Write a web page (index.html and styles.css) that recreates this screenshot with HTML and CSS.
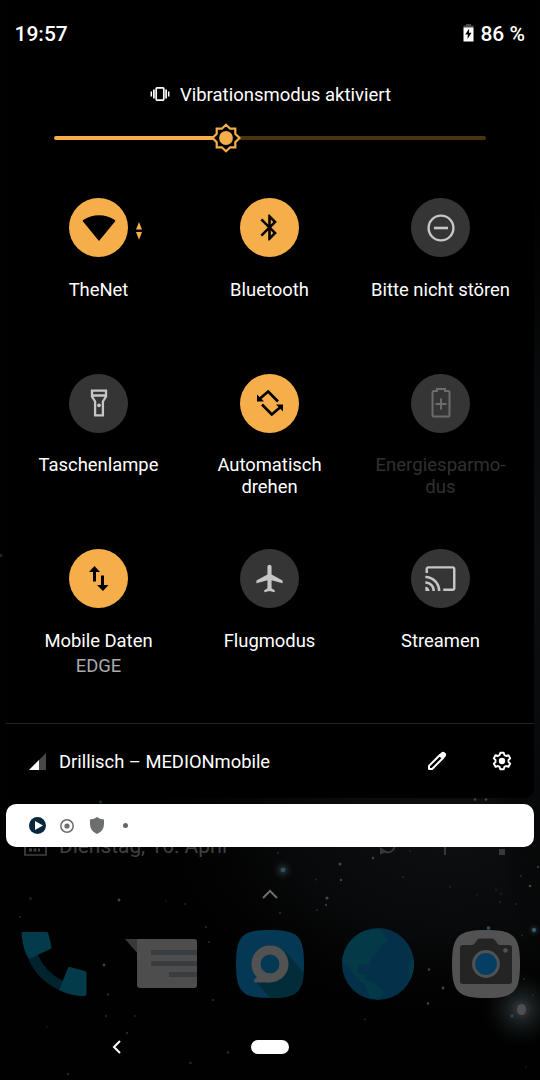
FILE: index.html
```html
<!DOCTYPE html>
<html lang="de">
<head>
<meta charset="utf-8">
<title>Schnelleinstellungen</title>
<link rel="stylesheet" href="styles.css">
</head>
<body>
<div class="screen">
  <svg class="wallpaper" viewBox="0 0 540 1080" aria-hidden="true">
    <defs>
      <radialGradient id="haze"><stop offset="0" stop-color="#0e0f11"/><stop offset=".5" stop-color="#08090a"/><stop offset="1" stop-color="#000" stop-opacity="0"/></radialGradient>
      <radialGradient id="glow"><stop offset="0" stop-color="#3c3c3c"/><stop offset=".28" stop-color="#1b2224"/><stop offset="1" stop-color="#0b0b0b" stop-opacity="0"/></radialGradient>
    </defs>
    <rect width="540" height="1080" fill="#010101"/>
    <ellipse cx="450" cy="830" rx="320" ry="210" fill="url(#haze)"/>
    <ellipse cx="540" cy="560" rx="60" ry="400" fill="url(#haze)"/>
    <circle cx="521" cy="1009" r="38" fill="url(#glow)"/>
    <ellipse cx="521.500" cy="1009.500" rx="4.500" ry="5.500" fill="#4d4f50"/>
    <circle cx="283" cy="870" r="11" fill="url(#glow)"/>
    <circle cx="283" cy="870" r="2.300" fill="#315065"/>
    <circle cx="534" cy="930" r="7" fill="url(#glow)"/>
    <circle cx="534" cy="930" r="2" fill="#336176"/>
    <circle cx="488.500" cy="928" r="1.800" fill="#265568"/>
    <circle cx="512" cy="1016" r="1.800" fill="#244654"/>
    <circle cx="100.500" cy="802" r="1.500" fill="#0b3341"/>
    <g fill="#434546">
      <circle cx="119" cy="900" r="1.500"/><circle cx="104" cy="965" r="1.500"/><circle cx="327" cy="898" r="1.600"/><circle cx="326" cy="905" r="1.100"/><circle cx="443" cy="988" r="1.400"/><circle cx="429" cy="969.500" r="1.200"/><circle cx="428" cy="1003.500" r="1.200"/><circle cx="341" cy="880" r="1.200"/><circle cx="340" cy="864" r="1.500"/><circle cx="373" cy="858" r="1.200"/><circle cx="530" cy="886" r="1.300"/><circle cx="475" cy="799.500" r="1.300"/><circle cx="486" cy="799.500" r="1.300"/><circle cx="538" cy="867" r="1"/>
    </g>
    <g fill="#262828">
      <circle cx="30.500" cy="898.500" r="1.300"/><circle cx="20" cy="917" r="1.100"/><circle cx="108" cy="994.500" r="1.200"/><circle cx="127" cy="1033" r="1.300"/><circle cx="106" cy="1016" r="1.100"/><circle cx="185" cy="904" r="1"/><circle cx="206" cy="927" r="1.100"/><circle cx="209" cy="942" r="1.100"/><circle cx="213" cy="1000" r="1.200"/><circle cx="228" cy="1052.500" r="1.300"/><circle cx="190.500" cy="1063" r="1.300"/><circle cx="68" cy="1074" r="1.200"/><circle cx="280" cy="913" r="1.200"/><circle cx="403" cy="877" r="1.100"/><circle cx="316" cy="879.500" r="1"/><circle cx="317" cy="910" r="1"/><circle cx="365" cy="1019.500" r="1"/><circle cx="521" cy="876" r="1.100"/><circle cx="500" cy="902" r="1.100"/><circle cx="516" cy="904" r="1"/><circle cx="501" cy="894" r=".9"/><circle cx="496" cy="889.500" r=".9"/><circle cx="450" cy="887" r=".9"/><circle cx="477" cy="895" r=".8"/><circle cx="522" cy="935.500" r="1"/><circle cx="524" cy="979" r="1"/><circle cx="533" cy="995" r="1"/><circle cx="278" cy="853" r="1"/><circle cx="410" cy="851" r=".9"/><circle cx="166" cy="901" r=".8"/><circle cx="135" cy="1016" r=".9"/><circle cx="47" cy="1027" r=".8"/><circle cx="1" cy="555.500" r="1.500"/><circle cx="526" cy="1067" r=".8"/>
    </g>
  </svg>

  <section class="panel">
    <header class="status">
      <span>19:57</span>
      <span class="battery">
        <svg width="11" height="18" viewBox="0 0 11 18"><path d="M3 0h5v1.500h2.500V4H.5V1.500H3z" fill="#4b4b4b"/><path d="M.5 3.500h10V17.500H.5z" fill="#fff"/><path d="M6.200 4.500 2.300 10.500h2.500L4.500 15 8.600 8.800H6z" fill="#000"/></svg>
        86 %
      </span>
    </header>

    <div class="ringer">
      <svg width="20" height="16" viewBox="0 0 20 16" fill="none" stroke="#fff"><rect x="6.200" y="1.900" width="7.600" height="12.200" rx=".8" stroke-width="1.700"/><path d="M3.900 3.500v9M16.100 3.500v9" stroke-width="1.700"/><path d="M1.300 5.500v5M18.700 5.500v5" stroke-width="1.500"/></svg>
      <span>Vibrationsmodus aktiviert</span>
    </div>

    <div class="brightness">
      <span class="level"></span>
      <svg class="thumb" width="30" height="30" viewBox="-15 -15 30 30"><path d="M0-13.200 4.200-9.300H9.300v5.100L13.500 0 9.300 4.200V9.300H4.200L0 13.200-4.200 9.300H-9.300V4.200L-13.500 0-9.300-4.200V-9.300h5.100z" fill="#000" stroke="#f5ae49" stroke-width="2.200"/><circle r="6.900" fill="#f5ae49"/></svg>
      <span class="rest"></span>
    </div>

    <div class="tiles">
      <div class="tile">
        <div class="disc on"><svg width="34" height="28" viewBox="0 0 34 28"><path d="M17 27 .8 7.300Q.5 6.600 1.200 6C10-.5 24-.5 32.800 6q.7.600.4 1.300z"/></svg>
          <svg class="activity" width="6" height="18" viewBox="0 0 6 18" fill="#f5ae49"><path d="M3 0 6 7.500H0zM0 10h6l-3 7.700z"/></svg></div>
        <span>TheNet</span>
      </div>
      <div class="tile">
        <div class="disc on"><svg width="31" height="31" viewBox="0 0 24 24"><path d="M17.710 7.710 12 2h-1v7.590L6.410 5 5 6.410 10.590 12 5 17.590 6.410 19 11 14.410V22h1l5.710-5.710L13.410 12zM13 5.830l1.880 1.880L13 9.590zm1.880 10.460L13 18.170v-3.760z"/></svg></div>
        <span>Bluetooth</span>
      </div>
      <div class="tile">
        <div class="disc"><svg width="28" height="28" viewBox="0 0 28 28" fill="none" stroke="#c6c6c6"><circle cx="14" cy="14" r="12.400" stroke-width="2.400"/><path d="M7 14h14" stroke-width="2.600"/></svg></div>
        <span>Bitte nicht stören</span>
      </div>
      <div class="tile">
        <div class="disc"><svg width="18" height="28" viewBox="0 0 18 28" fill="none" stroke="#c6c6c6" stroke-width="2.300"><path d="M2 1.700h14v6L12.900 12.500v13.800H5.100V12.500L2 7.700zM2 6.500h14"/><circle cx="9" cy="16.300" r="1.900" fill="#c6c6c6" stroke="none"/></svg></div>
        <span>Taschenlampe</span>
      </div>
      <div class="tile">
        <div class="disc on"><svg width="30" height="30" viewBox="-15 -15 30 30" fill="none" stroke="#000" stroke-width="2.700"><path d="M-10-4.500-1.800-11.500 8-1.500M-8 1.500 1.800 11.500 10 4.500"/><path d="M-13-8.500v7h7zM13 8.500v-7H6z" fill="#000" stroke="none"/></svg></div>
        <span>Automatisch drehen</span>
      </div>
      <div class="tile off">
        <div class="disc"><svg width="20" height="32" viewBox="0 0 20 32" fill="none" stroke="#6b6c6d" stroke-width="2"><path d="M6 4V2h8v2h3q1.500 0 1.500 1.500v22.500q0 1.500-1.500 1.500H3q-1.500 0-1.500-1.500V5.500Q1.500 4 3 4zM10 11.500v11M4.500 17h11"/></svg></div>
        <span>Energiesparmo-<br>dus</span>
      </div>
      <div class="tile">
        <div class="disc on"><svg width="20" height="26" viewBox="0 0 20 26"><path d="M5.500 0 11 6H7v9.500H4V6H0zM12 9.500h3V19h4.500L14 25 8 19h4z"/></svg></div>
        <span>Mobile Daten</span><span class="sub">EDGE</span>
      </div>
      <div class="tile">
        <div class="disc"><svg width="33" height="33" viewBox="0 0 24 24" fill="#c6c6c6"><path d="M21.500 15.500v-2L13.500 9V3.500C13.500 2.670 12.830 2 12 2s-1.500.670-1.500 1.500V9l-8 4.500v2l8-2.200V19l-2.300 1.500V22l3.800-1 3.800 1v-1.500L13.500 19v-5.700z"/></svg></div>
        <span>Flugmodus</span>
      </div>
      <div class="tile">
        <div class="disc"><svg width="33" height="33" viewBox="0 0 24 24" fill="#c6c6c6"><path d="M20.900 3H3.100c-1.100 0-2 .9-2 2v3h1.800V4.800h18.200v14.400H14V21h6.900c1.100 0 2-.9 2-2V5c0-1.100-.9-2-2-2zM1 18v3h3c0-1.660-1.340-3-3-3zm0-4v1.900c2.830 0 5.100 2.270 5.100 5.100H8c0-3.870-3.130-7-7-7zm0-4v1.900c5.030 0 9.100 4.070 9.100 9.100H12c0-6.080-4.930-11-11-11z"/></svg></div>
        <span>Streamen</span>
      </div>
    </div>

    <footer class="carrier">
      <svg width="17" height="17" viewBox="0 0 17 17"><path d="M17 0v17H0z" fill="#484848"/><path d="M10 7v10H0z" fill="#fff"/></svg>
      <span>Drillisch – MEDIONmobile</span>
      <svg class="edit" width="20" height="20" viewBox="0 0 20 20"><path d="M2 14.900V18h3.100L15.800 7.300l-3.100-3.100z" fill="none" stroke="#fff" stroke-width="2" stroke-linejoin="round"/><path d="m11.800 4.100 2.300-2.300q2-1.800 3.600-.3l.8.800q1.500 1.600-.3 3.600L15.900 8.200z" fill="#fff"/></svg>
      <svg width="20" height="20" viewBox="-10 -10 20 20"><path d="M-1.700-8.300h3.400L2.400-5.900 4.100-5 6.500-5.800 8.200-2.600 6.500-1v2l1.700 1.600L6.500 5.800 4.100 5 2.400 5.900 1.700 8.300h-3.400L-2.400 5.900-4.100 5-6.500 5.800-8.200 2.600-6.500 1v-2l-1.700-1.600 1.700-3.200 2.400.8 1.700-.9z" fill="none" stroke="#fff" stroke-width="1.900" stroke-linejoin="round"/><circle r="3.200" fill="#fff"/></svg>
    </footer>
  </section>

  <section class="notifications">
    <svg width="17" height="17" viewBox="0 0 17 17"><circle cx="8.500" cy="8.500" r="8.500" fill="#07283f"/><path d="M6 4v9l8-4.500z" fill="#fff"/></svg>
    <svg width="14" height="14" viewBox="0 0 14 14"><circle cx="7" cy="7" r="6.200" fill="none" stroke="#6d6d6d" stroke-width="1.500"/><circle cx="7" cy="7" r="2.600" fill="#6d6d6d"/></svg>
    <svg width="14" height="17" viewBox="0 0 14 17"><path d="M0 2.500Q4.500 2.300 7 0q2.500 2.300 7 2.500V7q0 7-7 10-7-3-7-10z" fill="#6d6e6e"/></svg>
    <svg width="5" height="5" viewBox="0 0 5 5"><circle cx="2.500" cy="2.500" r="2.500" fill="#666"/></svg>
  </section>

  <div class="widget">
    <svg width="23" height="24" viewBox="0 0 23 24" fill="none" stroke="#404040" stroke-width="1.700"><path d="M1 1h21v21H1z"/><path d="M5 17h11" stroke-width="3" stroke-dasharray="3 1.500"/></svg>
    <span>Dienstag, 16. April</span>
    <svg width="18" height="20" viewBox="0 0 18 20" fill="none" stroke="#383838" stroke-width="2"><path d="M4 15q4 4 8 1.500 4-2.500 4.500-8"/><path d="M1 19.500V12l7 5z" fill="#383838" stroke="none"/></svg>
    <svg class="plus" width="20" height="20" viewBox="0 0 20 20" stroke="#383838" stroke-width="2"><path d="M10 0v20M0 10h20"/></svg>
    <svg class="more" width="6" height="20" viewBox="0 0 6 20" fill="#383838"><path d="M0 0h6v5H0zM0 7h6v5H0zM0 14h6v6H0z"/></svg>
  </div>
  <div class="drawer"><svg width="16" height="10" viewBox="0 0 16 10" fill="none" stroke="#6c6c6c" stroke-width="2"><path d="m1 9 7-7 7 7"/></svg></div>

  <div class="dock">
    <svg width="66" height="66" viewBox="0 0 66 66"><path d="M7 27Q16 49 38 59l4-9Q24 41 17 24z" fill="#02222e"/><path d="M2 1h23q2 0 2.500 2L30.500 16q.3 1.500-1 2L8 28Q2 20 .5 3 .5 1 2 1zM49 36l15 4q1.500.5 1.500 2v21q0 2-2 2Q50 65 38 59l9-22q.5-1.300 2-1z" fill="#043b4b"/></svg>
    <svg width="72" height="50" viewBox="0 0 72 50"><path d="M0 0h14v16z" fill="#37393b"/><path d="M12 0h57q3 0 3 3v43q0 3-3 3H15q-3 0-3-3z" fill="#4d4d4d"/><path d="M26 11h46v5H26zm0 11h46v5H26zm18 11h28v5H44z" fill="#3a3d3f"/></svg>
    <svg width="68" height="68" viewBox="0 0 68 68"><path d="M0 34C0 6 6 0 34 0s34 6 34 34-6 34-34 34S0 62 0 34z" fill="#043853"/><path d="M50 22 67 42C66 62 60 68 34 68L20 52z" fill="#022c39"/><circle cx="34" cy="34" r="14" fill="#043853" stroke="#525252" stroke-width="9"/><path d="M34 43v9.500H20q-3-.5-1.500-3L24 44z" fill="#525252"/></svg>
    <svg width="72" height="72" viewBox="0 0 72 72"><clipPath id="globe"><circle cx="36" cy="36" r="36"/></clipPath><g clip-path="url(#globe)"><path d="M0 0h72v72H0z" fill="#043049"/><path d="M22 3 32 2l7 0 3 5 4 4-2 4-4 0-2 6-6 5-4 7 0 6-5-3-6 1-2 6 5 4 4-1-1 5 7 3 8 6 4 4-4 6-10 0-3-7-2-7-8-5-8-12L0 34V10z" fill="#043a47"/><path d="M73 29q-8 5-6 24 5-5 6-12z" fill="#043a47"/></g></svg>
    <svg width="68" height="68" viewBox="0 0 68 68"><path d="M0 34C0 6 6 0 34 0s34 6 34 34-6 34-34 34S0 62 0 34z" fill="#525252"/><path d="M11 15h9q2 0 3-2l2-3q1-1.500 3-1.500h12q2 0 3 1.500l2 3q1 2 3 2h9q3 0 3 3v33q0 3-3 3H11q-3 0-3-3V18q0-3 3-3z" fill="#242424"/><circle cx="34" cy="34" r="12.400" fill="#043f63" stroke="#525252" stroke-width="3"/><circle cx="53.500" cy="20.500" r="2.300" fill="#525252"/></svg>
  </div>

  <nav class="nav">
    <svg width="10" height="14" viewBox="0 0 10 14" fill="none" stroke="#fff" stroke-width="2"><path d="M8 1 2 7l6 6"/></svg>
    <span class="home"></span>
  </nav>
</div>
</body>
</html>
```

FILE: styles.css
```css
* { box-sizing: border-box; }
body { margin: 0; background: #000; font-family: Roboto, "Noto Sans", sans-serif; }
svg { display: block; flex: none; }

.screen { position: relative; isolation: isolate; width: 540px; height: 1080px; overflow: hidden; display: flex; flex-direction: column; }
.wallpaper { position: absolute; inset: 0; z-index: -1; width: 540px; height: 1080px; }

.panel { height: 798px; flex: none; margin: 0 6px; background: #000; border-radius: 0 0 9px 9px; color: #fff; display: flex; flex-direction: column; }

.status { height: 68px; padding: 0 9px 0 8.5px; display: flex; justify-content: space-between; align-items: center; font-size: 21px; font-weight: 500; line-height: 24px; }
.battery { display: flex; align-items: center; gap: 6px; }
.battery svg { margin-top: -3px; }

.ringer { height: 52px; display: flex; justify-content: center; align-items: center; gap: 10px; font-size: 18.5px; padding-left: 1px; }
.ringer span { padding-top: 2px; }

.brightness { height: 36px; padding: 0 48px; display: flex; align-items: center; }
.level, .rest { height: 4px; border-radius: 2px; }
.level { width: 160px; background: #f5ae49; }
.thumb { margin: 0 -3px; position: relative; }
.rest { flex: 1; background: #4a3313; }

.tiles { height: 567px; padding: 42px 7px 0; display: grid; grid-template-columns: repeat(3, 171px); grid-template-rows: repeat(3, 175.5px); }
.tile { display: flex; flex-direction: column; align-items: center; text-align: center; font-size: 18.4px; line-height: 21.5px; }
.tile span { max-width: 148px; }
.disc { position: relative; width: 59px; height: 59px; border-radius: 50%; background: #353535; display: flex; align-items: center; justify-content: center; margin-bottom: 21.8px; }
.disc.on { background: #f5ae49; }
.activity { position: absolute; left: 67px; top: 24px; }
.off { color: #303030; }
.off .disc { margin-bottom: 22.6px; }
.off span { font-size: 18.6px; }
.tile .sub { margin-top: 4px; color: #aaa; }

.carrier { height: 75px; border-top: 1px solid #242424; padding: 0 22px 0 23px; display: flex; align-items: center; font-size: 18.35px; }
.carrier span { margin-left: 13px; padding-top: 1px; }
.edit { margin-left: auto; margin-right: 45px; }

.notifications { position: relative; z-index: 1; height: 43px; flex: none; margin: 6px 6px 0 5.5px; padding-left: 23px; border-radius: 10px; background: #fff; display: flex; align-items: center; }
.notifications svg + svg { margin-left: 14.5px; }
.notifications svg:nth-child(3) { margin-left: 15.5px; }
.notifications svg:last-child { margin-left: 19.5px; }

.widget { height: 60px; flex: none; margin-top: -19px; padding: 3px 0 29px 24px; display: flex; align-items: center; color: #404040; font-size: 20.9px; line-height: 28px; }
.widget span { margin-left: 12px; width: 320px; padding-top: 2px; white-space: nowrap; }
.plus { margin-left: 38px; }
.more { margin-left: 44px; }

.drawer { height: 30px; flex: none; display: flex; justify-content: center; padding-top: 1px; }
.dock { height: 92px; flex: none; padding: 0 20px 0 21px; display: flex; justify-content: space-between; align-items: center; }
.nav { height: 75px; display: flex; align-items: center; padding: 4px 0 0 112px; }
.home { width: 38px; height: 14px; border-radius: 7px; background: #fff; margin-left: 129px; }
```
